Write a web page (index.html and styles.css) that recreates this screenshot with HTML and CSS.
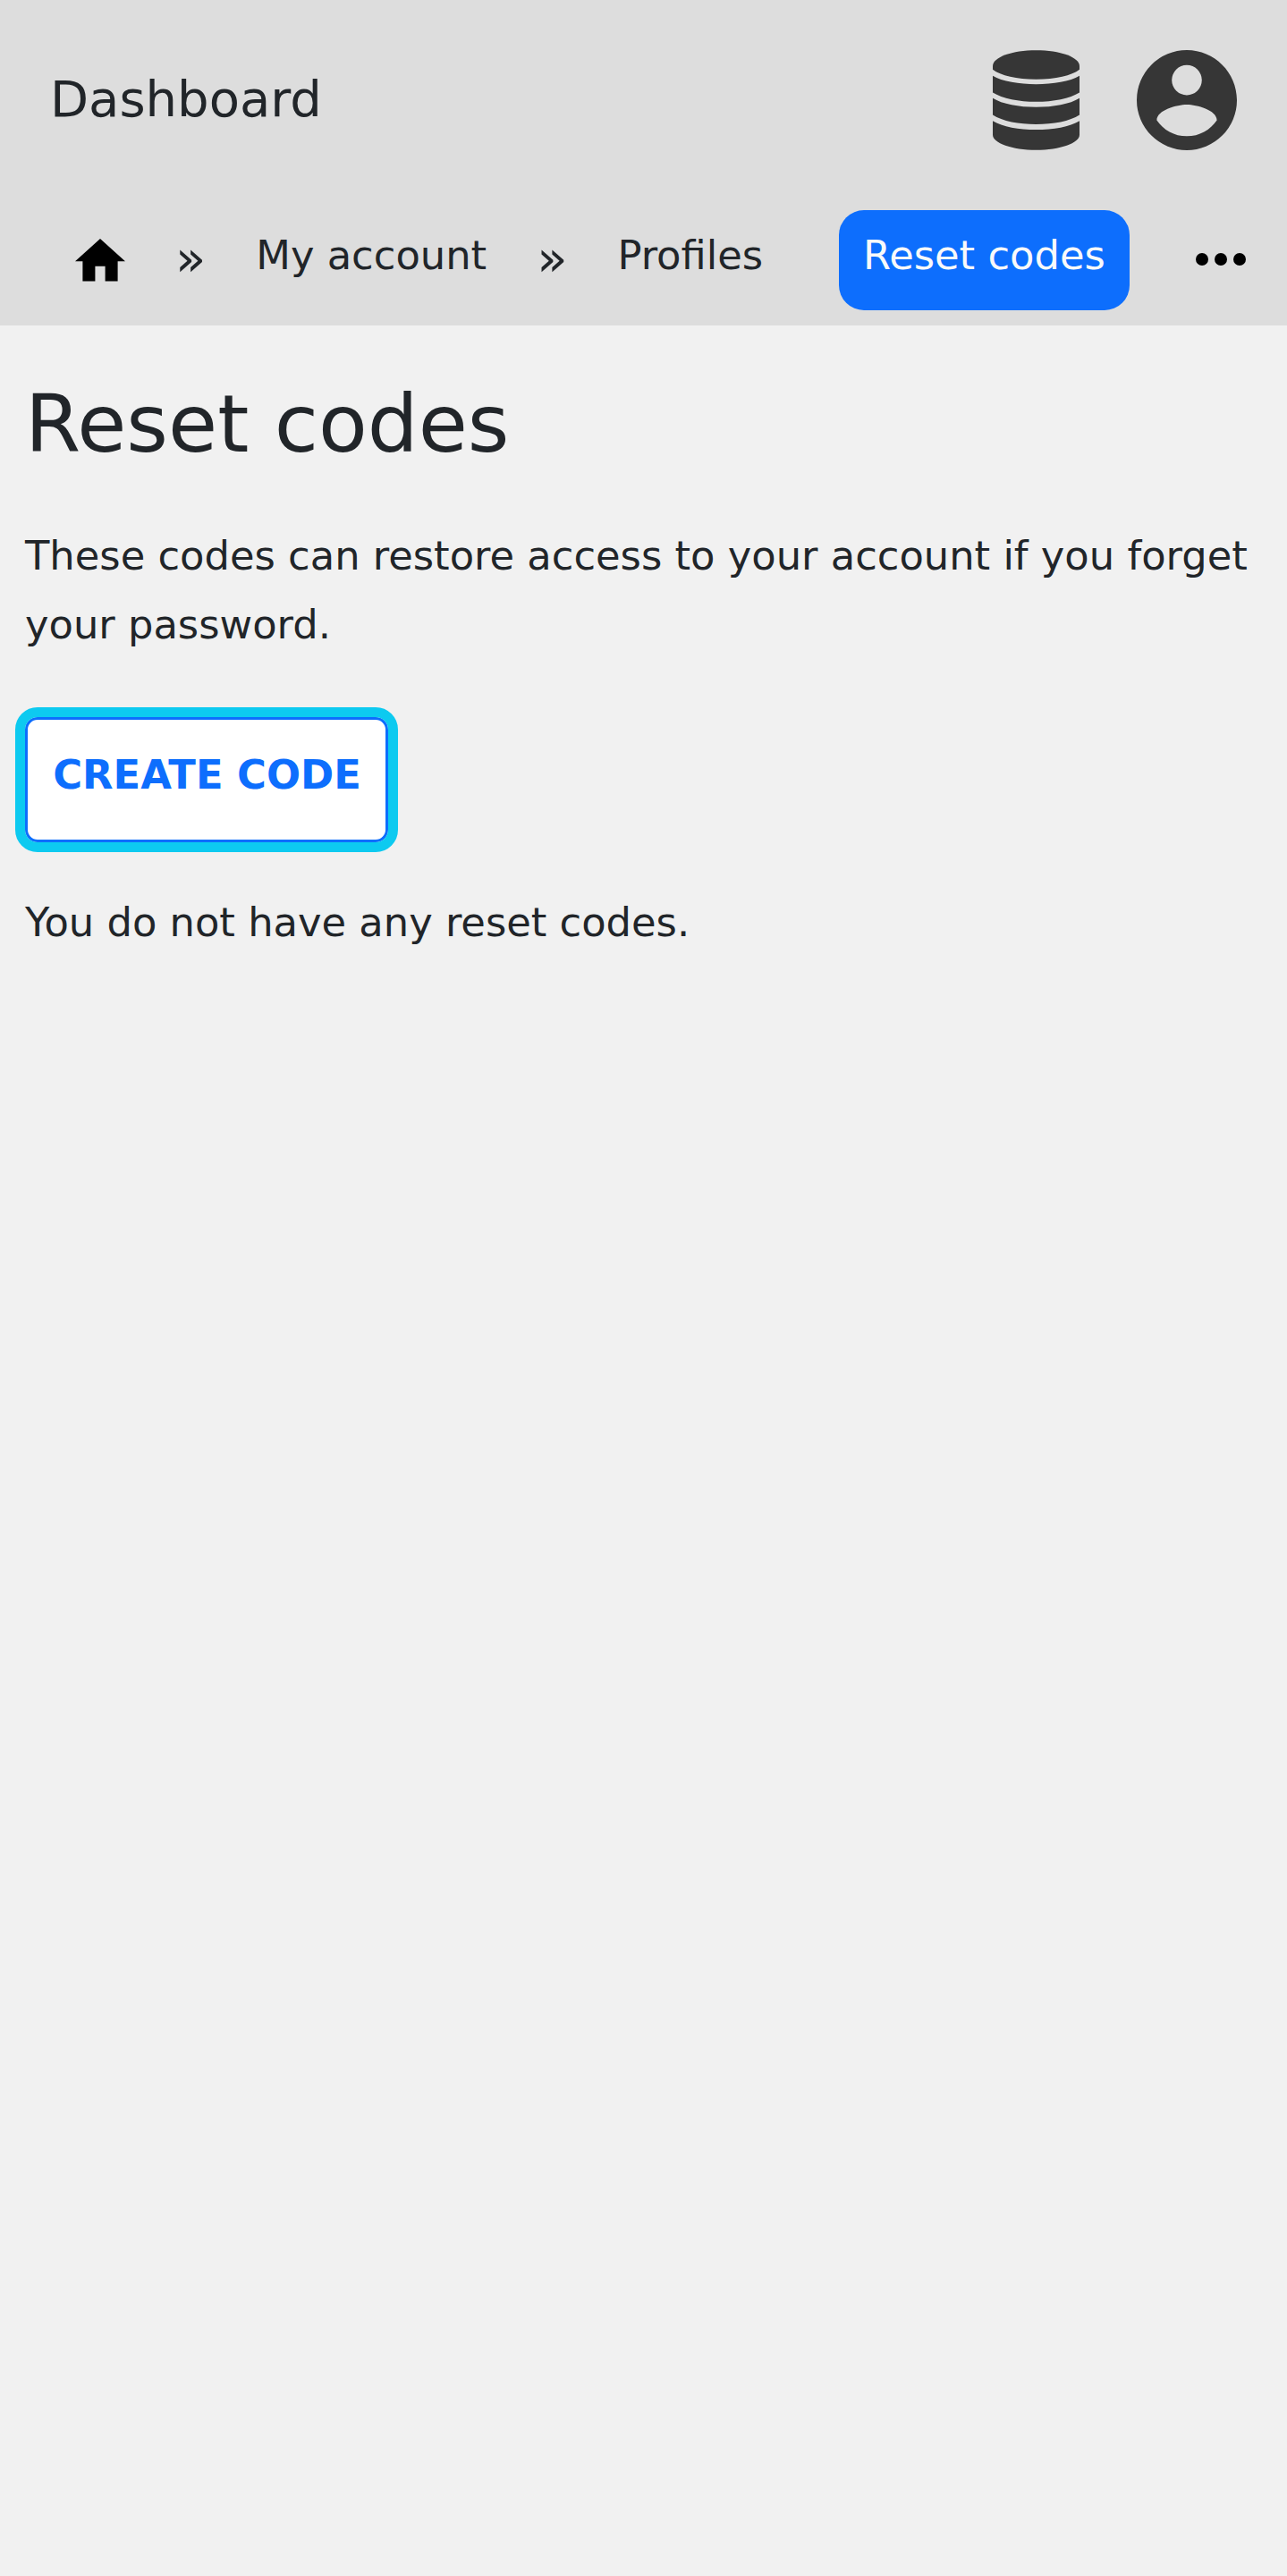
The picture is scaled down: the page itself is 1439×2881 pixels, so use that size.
FILE: index.html
```html
<!DOCTYPE html>
<html lang="en">
<head>
<meta charset="utf-8">
<title>Reset codes</title>
<link rel="stylesheet" href="styles.css">
</head>
<body>
<header class="header">
  <div class="topbar">
    <a class="brand">Dashboard</a>
    <svg class="icon-database" viewBox="0 0 291 335" aria-hidden="true">
      <path d="M0 53C0 23 65 0 145.5 0S291 23 291 53V65C265 85 210 98 145.5 98S26 85 0 65Z"/>
      <path d="M0 86C32 105 88 114 145.5 114S259 105 291 86V142C259 162 203 173 145.5 173S32 162 0 142Z"/>
      <path d="M0 161C32 181 88 191 145.5 191S259 181 291 161V217C259 238 203 248.500 145.500 248.500S32 238 0 217Z"/>
      <path d="M0 237C32 257 88 266.500 145.500 266.500S259 257 291 237V284C291 312 226 335 145.500 335S0 312 0 284Z"/>
    </svg>
    <svg class="icon-account" viewBox="2 2 20 20" aria-hidden="true">
      <path d="M12,19.2C9.5,19.2 7.29,17.92 6,16C6.03,14 10,12.9 12,12.9C14,12.9 17.97,14 18,16C16.71,17.92 14.5,19.2 12,19.2M12,5A3,3 0 0,1 15,8A3,3 0 0,1 12,11A3,3 0 0,1 9,8A3,3 0 0,1 12,5M12,2A10,10 0 0,0 2,12A10,10 0 0,0 12,22A10,10 0 0,0 22,12C22,6.47 17.5,2 12,2Z"/>
    </svg>
  </div>
  <nav class="crumbs">
    <svg class="icon-home" viewBox="2 3 20 17" aria-hidden="true">
      <path d="M10,20V14H14V20H19V12H22L12,3L2,12H5V20H10Z"/>
    </svg>
    <span class="separator">»</span>
    <a class="crumb">My account</a>
    <span class="separator">»</span>
    <a class="crumb">Profiles</a>
    <a class="crumb crumb-active">Reset codes</a>
    <svg class="icon-more" viewBox="0 0 56 14" aria-hidden="true">
      <circle cx="7" cy="7" r="7"/>
      <circle cx="28" cy="7" r="7"/>
      <circle cx="49" cy="7" r="7"/>
    </svg>
  </nav>
</header>
<main class="content">
  <h1 class="title">Reset codes</h1>
  <p class="text">These codes can restore access to your account if you forget your password.</p>
  <button class="button" type="button">CREATE CODE</button>
  <p class="text">You do not have any reset codes.</p>
</main>
</body>
</html>
```
FILE: styles.css
```css
* {
  box-sizing: border-box;
}

body {
  margin: 0;
  min-height: 100vh;
  background: #f1f1f1;
  color: #212529;
  font-family: "DejaVu Sans", sans-serif;
  font-size: 44.8px;
  line-height: 77px;
}

.header {
  height: 364px;
  background: #ddd;
}

.topbar {
  display: flex;
  align-items: center;
  height: 224px;
  padding: 0 56px;
}

.brand {
  font-size: 56px;
  margin-right: auto;
  padding-bottom: 4px;
}

.icon-database {
  width: 97px;
  height: 112px;
  margin-right: 64px;
  fill: #363636;
}

.icon-account {
  width: 112px;
  height: 112px;
  fill: #363636;
}

.crumbs {
  display: flex;
  align-items: flex-start;
  gap: 56px;
  padding: 10.5px 46px 0 84px;
}

.icon-home {
  width: 56px;
  height: 47.6px;
  margin-top: 32.8px;
}

.separator {
  font-size: 56px;
  margin-top: 15.2px;
}

.crumb {
  height: 112px;
  padding-top: 12.8px;
}

.crumb-active {
  margin-left: 28.5px;
  padding-right: 27.5px;
  padding-left: 27.5px;
  border-radius: 28px;
  background: #0d6efd;
  color: #f8f9fa;
}

.icon-more {
  width: 56px;
  height: 14px;
  margin-top: 48.8px;
  margin-left: auto;
}

.content {
  padding: 56px 28px;
}

.title {
  margin: 0 0 55px;
  font-size: 89.6px;
  font-weight: 400;
  line-height: 108px;
}

.text {
  margin: 0;
}

.button {
  display: block;
  width: 406px;
  height: 140px;
  margin: 65px 0 51px;
  padding: 0 0 11px 1px;
  border: 3px solid #0d6efd;
  border-radius: 14px;
  outline: 11px solid #0dcaf0;
  background: #fff;
  color: #0d6efd;
  font: inherit;
  font-weight: 700;
}
```
